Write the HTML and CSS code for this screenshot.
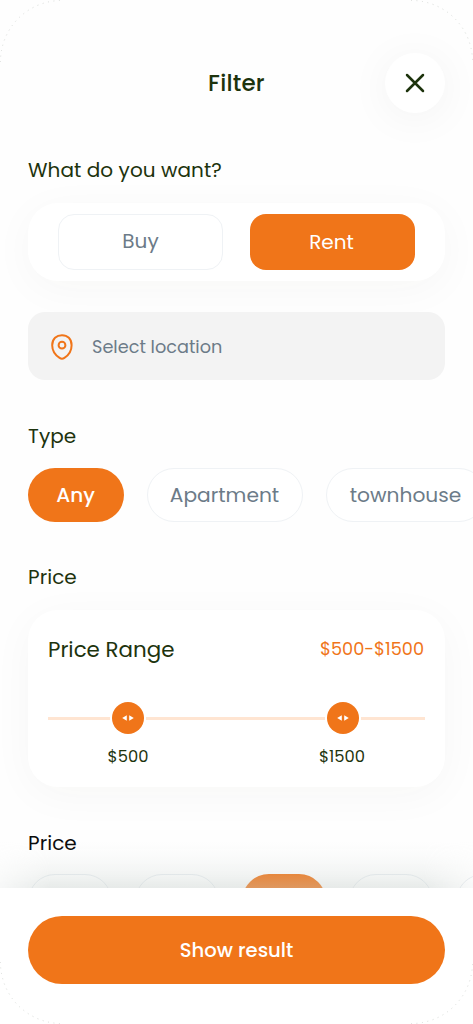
FILE: index.html
```html
<!DOCTYPE html>
<html lang="en">
<head>
<meta charset="utf-8">
<title>Filter</title>
<link rel="stylesheet" href="styles.css">
</head>
<body>
<div class="screen">
  <main class="content">
    <header class="header">
      <h1 class="title">Filter</h1>
      <button class="close" aria-label="Close">
        <svg width="20" height="20" viewBox="0 0 20 20" fill="none" stroke="#1d330d" stroke-width="2.5" stroke-linecap="round"><path d="M2 2l16 16M18 2L2 18"/></svg>
      </button>
    </header>

    <h2 class="label">What do you want?</h2>
    <div class="segment">
      <button class="option option-buy">Buy</button>
      <button class="option option-active">Rent</button>
    </div>

    <div class="location">
      <svg class="pin" width="22" height="26" viewBox="0 0 22 26" fill="none" stroke="#f07519" stroke-width="2"><path d="M1.200 11.200C1.200 4.800 5.500 1.200 11 1.200s9.600 3.600 9.600 10c0 5-3.100 10-7.200 12.700a4.300 4.300 0 0 1-4.800 0C4.500 21.200 1.200 16.200 1.200 11.200z"/><circle cx="11" cy="11.200" r="3.400"/></svg>
      <span class="location-text">Select location</span>
    </div>

    <h2 class="label label-type">Type</h2>
    <div class="chips">
      <button class="chip chip-any">Any</button>
      <button class="chip chip-apartment">Apartment</button>
      <button class="chip chip-townhouse">townhouse</button>
    </div>

    <h2 class="label label-price">Price</h2>
    <section class="price-card">
      <div class="price-head">
        <span class="price-title">Price Range</span>
        <span class="price-value">$500-$1500</span>
      </div>
      <div class="slider">
        <span class="line line-start"></span>
        <span class="knob"><svg width="12" height="6" viewBox="0 0 12 6" fill="#fff"><path d="M4.800 .3v5.400L.2 3zM7.200 .3v5.400L11.800 3z"/></svg></span>
        <span class="line line-middle"></span>
        <span class="knob"><svg width="12" height="6" viewBox="0 0 12 6" fill="#fff"><path d="M4.800 .3v5.400L.2 3zM7.200 .3v5.400L11.800 3z"/></svg></span>
        <span class="line line-end"></span>
      </div>
      <div class="ticks">
        <span class="tick tick-low">$500</span>
        <span class="tick tick-high">$1500</span>
      </div>
    </section>

    <h2 class="label label-last">Price</h2>
    <div class="pills">
      <span class="pill"></span><span class="pill"></span><span class="pill pill-active"></span><span class="pill"></span><span class="pill"></span>
    </div>
  </main>

  <footer class="footer">
    <button class="submit">Show result</button>
  </footer>

  <svg class="corners" width="473" height="1024" viewBox="0 0 473 1024" fill="none" stroke="#d9dcd9" stroke-width="1" stroke-dasharray="1 4.500"><path d="M.5 62A61 61 0 0 1 62 .5M411 .5A61 61 0 0 1 472.500 62M.5 962A61 61 0 0 0 62 1023.500M411 1023.500A61 61 0 0 0 472.500 962"/></svg>
</div>
</body>
</html>
```

FILE: styles.css
```css
* { box-sizing: border-box; }
body { margin: 0; background: #fff; }
button { font: inherit; border: 0; padding: 0; letter-spacing: inherit; }

.screen {
  position: relative;
  width: 473px;
  height: 1024px;
  overflow: hidden;
  display: flex;
  flex-direction: column;
  background: #fefefe;
  font-family: Poppins, Inter, "Open Sans", sans-serif;
  font-size: 20px;
  color: #1d330d;
}
.content { height: 888px; padding: 53px 28px 0; overflow: hidden; }

.header { display: grid; grid-template-columns: 60px 1fr 60px; height: 60px; align-items: start; }
.title { grid-column: 2; margin: 0; text-align: center; font-size: 23px; line-height: 61px; font-weight: 500; letter-spacing: .2px; }
.close {
  display: grid;
  place-items: center;
  width: 60px;
  height: 60px;
  border-radius: 50%;
  background: #fff;
  box-shadow: 0 5px 44px rgba(0, 0, 0, .05);
}

.label { margin: 0; height: 30px; font-size: 20px; line-height: 30px; font-weight: 400; white-space: nowrap; letter-spacing: .06px; }
.header + .label { margin-top: 42px; }

.segment {
  display: flex;
  gap: 27px;
  height: 78px;
  margin-top: 18px;
  padding: 11px 30px;
  border-radius: 30px;
  background: #fff;
  box-shadow: 0 8px 44px rgba(60, 50, 20, .035);
}
.option { width: 165px; height: 56px; border-radius: 16px; border: 1.500px solid #eff2f5; background: #fff; color: #6c7b88; }
.option-buy { padding-bottom: 2px; }
.option-active { border: 0; padding-right: 2px; background: #f07519; color: #fff; }

.location { display: flex; align-items: center; height: 68px; margin-top: 31px; padding: 2px 23px 0; border-radius: 17px; background: #f3f3f3; }
.location-text { margin: 0 0 2px 19px; font-size: 17.700px; color: #6c7b88; }

.label-type { margin-top: 41px; }
.chips { display: flex; gap: 23px; margin-top: 17px; }
.chip { flex: none; height: 54px; padding-right: 1px; border: 1.500px solid #eff2f5; border-radius: 27px; background: #fff; color: #6c7b88; font-size: 20.200px; }
.chip-any { width: 96px; border: 0; background: #f07519; color: #fff; font-weight: 500; font-size: 20px; }
.chip-apartment { width: 156px; }
.chip-townhouse { width: 160px; }

.label-price { margin-top: 40px; }
.price-card {
  height: 177px;
  margin-top: 18px;
  padding: 25px 20px 0;
  border-radius: 30px;
  background: #fff;
  box-shadow: 0 8px 44px rgba(60, 50, 20, .035);
}
.price-head { display: flex; justify-content: space-between; height: 30px; line-height: 30px; }
.price-title { font-size: 21.400px; }
.price-value { margin: -1px 1px 0 0; font-size: 17.700px; color: #f07519; }
.slider { display: flex; align-items: center; gap: 2px; height: 32px; margin-top: 37px; }
.line { height: 3px; background: #ffe5d2; }
.line-start { width: 62px; }
.line-middle { width: 178.500px; }
.line-end { width: 64.500px; }
.knob { flex: none; display: grid; place-items: center; width: 32px; height: 32px; border-radius: 50%; background: #f07519; }
.ticks { display: flex; margin-top: 11px; font-size: 16.300px; line-height: 24px; text-align: center; }
.tick { width: 60px; }
.tick-low { margin-left: 50px; }
.tick-high { margin-left: 154px; }

.label-last { margin-top: 41px; color: #0b0b0b; }
.pills { display: flex; gap: 23.500px; margin-top: 16px; }
.pill { flex: none; width: 83.500px; height: 54px; border: 1.500px solid #eaeef2; border-radius: 27px; background: #fff; }
.pill-active { border: 0; background: #f07519; }

.footer { position: relative; height: 136px; padding: 28px; background: #fff; }
/* Soft shade above the sticky footer, weaker at both sides. */
.footer::before {
  content: "";
  position: absolute;
  left: 0;
  right: 0;
  bottom: 100%;
  height: 48px;
  background: linear-gradient(to top, rgba(196, 205, 201, .4), rgba(196, 205, 201, .2) 30%, rgba(196, 205, 201, .06) 65%, rgba(196, 205, 201, 0));
  -webkit-mask-image: linear-gradient(to right, rgba(0, 0, 0, .3), #000 50px, #000 423px, rgba(0, 0, 0, .3));
  mask-image: linear-gradient(to right, rgba(0, 0, 0, .3), #000 50px, #000 423px, rgba(0, 0, 0, .3));
}
.submit { display: block; width: 417px; height: 68px; border-radius: 34px; background: #f07519; color: #fff; font-size: 19.600px; font-weight: 500; }
.corners { position: absolute; left: 0; top: 0; pointer-events: none; }
```
